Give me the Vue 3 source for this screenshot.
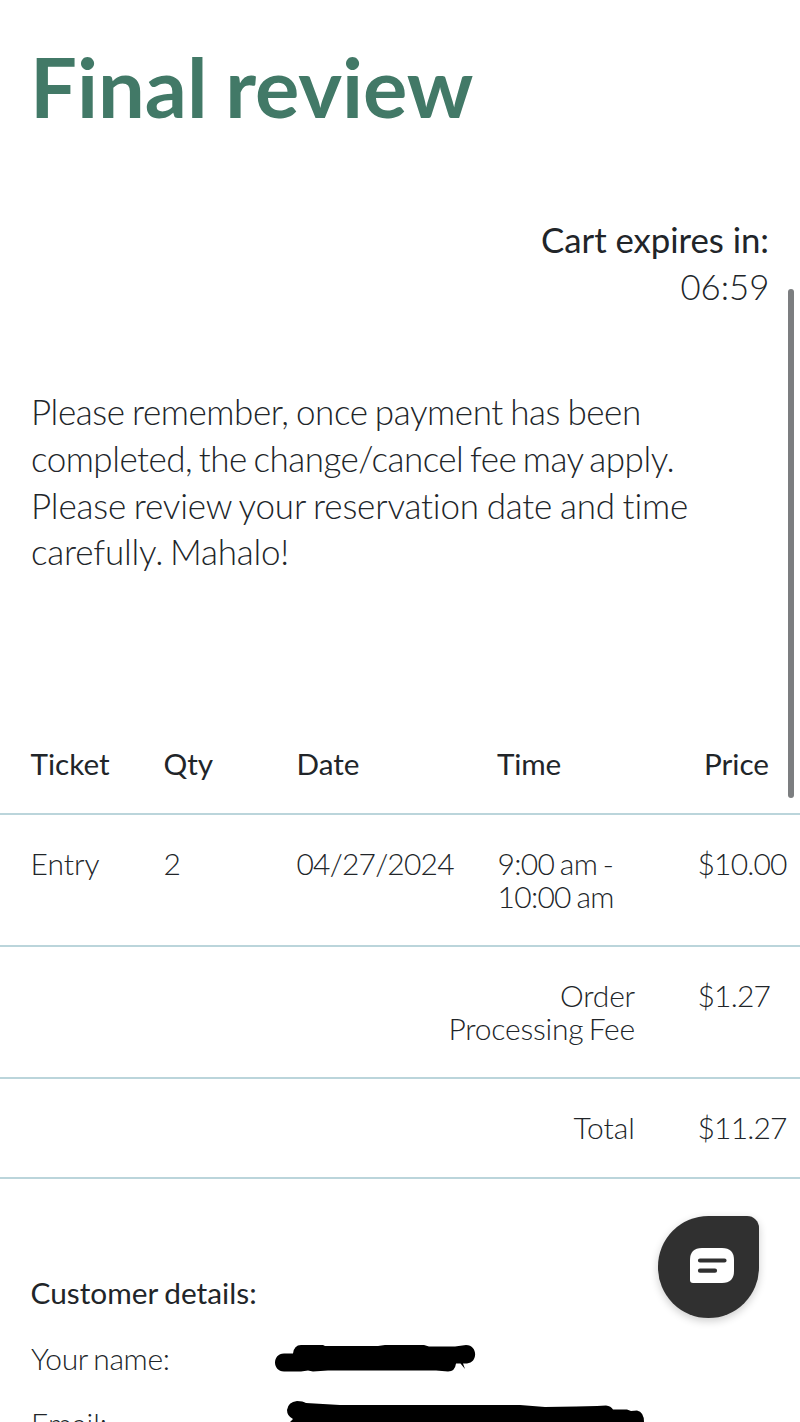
<template>
  <main class="page">
    <h1>Final review</h1>
    <div class="cart"><b>Cart expires in:</b><span>06:59</span></div>
    <p class="note">
      <span class="l1">Please remember, once payment has been</span>
      <span class="l2">completed, the change/cancel fee may apply.</span>
      <span class="l3">Please review your reservation date and time</span>
      <span class="l4">carefully. Mahalo!</span>
    </p>
    <section class="table">
      <div class="row head"><span>Ticket</span><span>Qty</span><span>Date</span><span>Time</span><span class="ph">Price</span></div>
      <div class="row item"><span>Entry</span><span>2</span><span class="num">04/27/2024</span><span class="time">9:00 am -<br>10:00 am</span><span class="num">$10.00</span></div>
      <div class="sum fee"><span>Order<br>Processing Fee</span><span class="num">$1.27</span></div>
      <div class="sum total"><span>Total</span><span class="num">$11.27</span></div>
    </section>
    <h2>Customer details:</h2>
    <div class="detail name">Your name:</div>
    <div class="detail">Email:</div>
    <svg class="ink" width="390" height="82" viewBox="270 1340 390 82">
      <path d="M284 1353.500H293Q294 1345 301 1345H323L325 1346H378L385 1345H424L429 1346.500H455L466 1345C478 1345 478 1363 467 1363.500H463L465 1369L460.500 1363.500H456Q455 1371.500 448 1371.500L436 1370.500H328L313 1371.500L308 1370.500L301 1371.500H284C272 1371.500 272 1353.500 284 1353.500ZM297 1401Q303 1401 306 1403L340 1405H520L545 1407L576 1406.500L597 1406L606 1405.500Q611 1406 613 1409.500H627L631 1411L637 1410.500Q644 1412 644 1422H290L293 1419Q287 1416 287 1410Q288 1402 297 1401Z" />
    </svg>
    <div class="scroll"></div>
    <div class="chat">
      <svg width="44" height="35" viewBox="0 0 44 35">
        <path d="M12 0H32Q44 0 44 12V23Q44 35 32 35H3Q0 35 0 32V12Q0 0 12 0Z" fill="#fff" />
        <path d="M10 12.500H34.500M10 22.700H25" stroke="#303030" stroke-width="4.200" stroke-linecap="round" />
      </svg>
    </div>
  </main>
</template>
<script setup>
</script>
<style>
body { background: #fff; overflow: hidden; }
</style>
<style scoped>
.page { position: relative; width: 800px; height: 1422px; overflow: hidden; font-family: Lato, sans-serif; font-weight: 300; color: #212529; font-variant-ligatures: none; }
h1 { margin: 0; padding: 35px 30px 0; font-size: 83px; line-height: 102px; font-weight: 700; color: #427967; white-space: nowrap; word-spacing: -2.500px; }
.cart { margin-top: 78.500px; padding-right: 31px; text-align: right; font-size: 34.800px; line-height: 47px; }
.cart b { display: block; font-weight: 400; letter-spacing: -0.050px; }
.cart span { display: block; margin-right: -0.500px; }
.note { margin: 78.500px 0 0 31px; font-size: 35px; line-height: 46.800px; white-space: nowrap; }
.note span { display: block; }
.l1 { letter-spacing: -0.420px; word-spacing: -1.700px; }
.l2 { letter-spacing: -0.500px; word-spacing: -2.400px; }
.l3 { letter-spacing: -0.170px; word-spacing: -1.600px; }
.l4 { letter-spacing: -0.200px; word-spacing: -2.500px; }
.table { margin-top: 139px; font-size: 30px; line-height: 33px; white-space: nowrap; }
.row { display: grid; grid-template-columns: 133px 133px 201px 200px 102px; padding: 31.500px 0 0 30.500px; border-bottom: 2px solid #bbd5db; box-sizing: border-box; }
.head { height: 101px; padding-top: 32.500px; font-weight: 400; font-size: 29.700px; }
.head span:nth-child(4) { margin-left: -0.500px; letter-spacing: -0.200px; }
.ph { text-align: right; width: 71.500px; }
.item { height: 132px; }
.num { letter-spacing: -0.800px; }
.time { letter-spacing: -0.700px; word-spacing: -1.700px; }
.sum { display: grid; grid-template-columns: 635px 102px; column-gap: 62.500px; padding-top: 31.500px; border-bottom: 2px solid #bbd5db; box-sizing: border-box; }
.sum span:first-child { text-align: right; }
.fee { height: 132px; }
.fee span:first-child { word-spacing: -2.700px; letter-spacing: -0.200px; }
.total { height: 100px; }
h2 { margin: 96.500px 0 31px 30.500px; font-size: 29.800px; line-height: 34px; font-weight: 400; word-spacing: -1px; }
.detail { margin-left: 31px; height: 65px; font-size: 30px; line-height: 34px; }
.name { letter-spacing: -0.350px; word-spacing: -2px; }
.ink { position: absolute; left: 270px; top: 1340px; fill: #000; }
.scroll { position: absolute; left: 787.500px; top: 289px; width: 6.500px; height: 509px; border-radius: 4px; background: #7c7e80; }
.chat { position: absolute; left: 657.500px; top: 1215.500px; width: 101.500px; height: 102px; border-radius: 51px 12px 51px 51px; background: #303030; box-shadow: 0 3px 8px #0003; display: flex; align-items: center; justify-content: center; }
.chat svg { fill: none; margin-left: 7px; margin-top: -2px; }
</style>
